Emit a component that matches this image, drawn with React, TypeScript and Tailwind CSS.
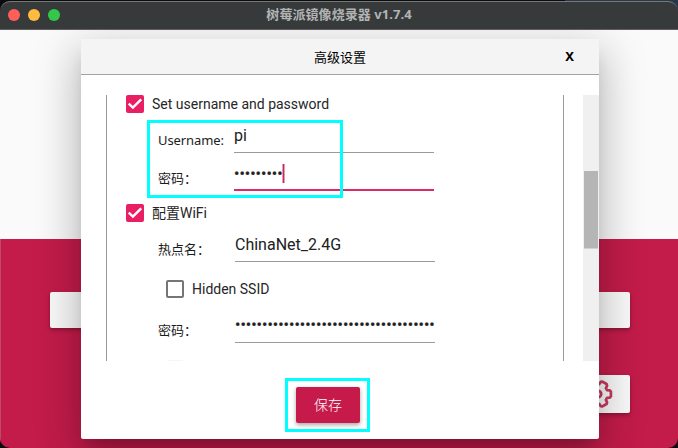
import type { ReactNode } from 'react';

const cjk = "font-['Noto_Sans','Noto_Sans_CJK_SC',sans-serif]";
const roboto = "font-['Roboto','Noto_Sans_CJK_SC',sans-serif]";

function Checkbox({ checked, label, className = '' }: { checked: boolean; label: string; className?: string }) {
  return (
    <div className={`flex h-[18px] items-center gap-2 ${className}`}>
      {checked ? (
        <span className="flex size-[18px] shrink-0 items-center justify-center rounded-[2px] bg-[#e91e63]">
          <svg width="18" height="18" viewBox="0 0 18 18" fill="none" stroke="#fff" strokeWidth="2.4">
            <path d="M2.7 8.6l4.2 4L15.2 4.4" />
          </svg>
        </span>
      ) : (
        <span className="size-[18px] shrink-0 rounded-[2px] border-2 border-[#767676]" />
      )}
      <span className={`whitespace-nowrap text-[14px] leading-[18px] text-[#262626] ${roboto}`}>{label}</span>
    </div>
  );
}

function Field({ label, className, labelClass = '', inputClass, children }: {
  label: string;
  className: string;
  labelClass?: string;
  inputClass: string;
  children: ReactNode;
}) {
  return (
    <div className={`flex pl-[51px] ${className}`}>
      <span className={`w-[76px] shrink-0 whitespace-nowrap text-[13px] leading-[18px] text-[#1c1c1c] ${cjk} ${labelClass}`}>{label}</span>
      <div className={`flex w-[200px] shrink-0 whitespace-nowrap text-[16px] leading-5 text-[#212121] ${roboto} ${inputClass}`}>
        {children}
      </div>
    </div>
  );
}

function Gear() {
  const angles = [0, 60, 120, 180, 240, 300];
  const tooth = [[9, -3.9], [11.8, -3.7], [12.9, -2.4], [12.9, 2.4], [11.8, 3.7], [9, 3.9]];
  const points = angles
    .flatMap((a) => {
      const r = (a * Math.PI) / 180;
      return tooth.map(([x, y]) => `${(x * Math.cos(r) - y * Math.sin(r)).toFixed(2)},${(x * Math.sin(r) + y * Math.cos(r)).toFixed(2)}`);
    })
    .join(' ');
  return (
    <svg width="30" height="30" viewBox="-15 -15 30 30" fill="none" stroke="#c83a5e" strokeWidth="2.7" strokeLinejoin="round">
      <polygon points={points} />
      <circle r="3.2" />
    </svg>
  );
}

export default function App() {
  return (
    <div className="relative h-[448px] w-[678px] overflow-hidden bg-[#0c0c0f] pt-px">
      <div className="absolute top-0 right-0 h-4 w-[113px] bg-[#28374b]" />
      <header className="relative z-10 flex h-[29px] items-center justify-center rounded-t-[10px] border-t border-b border-t-[#777979] border-b-[#625c5f] bg-[#373a3b] pb-1">
        <div className="absolute top-[7px] left-2 flex gap-2">
          <span className="size-3 rounded-full bg-[#ff5f59]" />
          <span className="size-3 rounded-full bg-[#ffbb40]" />
          <span className="size-3 rounded-full bg-[#34c84a]" />
        </div>
        <h1 className={`text-[13px] leading-[18px] font-bold tracking-[0.06px] text-[#b2b4b4] ${cjk}`}>树莓派镜像烧录器 v1.7.4</h1>
      </header>
      <div className="flex h-[418px] flex-col overflow-hidden rounded-b-[10px] bg-[#c31c4a]">
        <div className="h-[209px] shrink-0 bg-[#fafafa]" />
        <div className="flex flex-1 flex-col border-l border-[#bd4a6b] pt-[53px] pr-12 pl-[49px]">
          <div className="flex justify-between">
            <div className="h-9 w-[170px] rounded-[2px] bg-[#fafafa] shadow-[0_2px_4px_rgba(0,0,0,0.3)]" />
            <div className="h-9 w-[170px] rounded-[2px] bg-[#fafafa] shadow-[0_2px_4px_rgba(0,0,0,0.3)]" />
          </div>
          <div className="mt-[47px] flex h-[38px] w-16 items-center justify-center self-end rounded-[2px] bg-[#fafafa] shadow-[0_2px_4px_rgba(0,0,0,0.3)]">
            <Gear />
          </div>
        </div>
      </div>

      <section className="absolute top-[39px] left-[81px] flex h-[400px] w-[518px] flex-col rounded-b-[2px] bg-white shadow-[0_11px_15px_-7px_rgba(0,0,0,0.2),0_24px_38px_3px_rgba(0,0,0,0.14),0_9px_46px_8px_rgba(0,0,0,0.12)]">
        <div className="relative flex h-9 shrink-0 items-center justify-center border-b border-[#a3a3a3] bg-[#f4f4f4]">
          <h2 className={`text-[13px] leading-[18px] text-black ${cjk}`}>高级设置</h2>
          <button className={`absolute top-2 right-[25px] text-[13px] leading-[18px] font-bold text-black ${cjk}`}>X</button>
        </div>

        <div className="mt-5 flex h-[266px] shrink-0 justify-between overflow-hidden pl-[25px]">
          <div className="flex w-[458px] flex-col border-x border-[#9a9a9a]">
            <Checkbox checked label="Set username and password" className="ml-[19px] shrink-0" />
            <Field label="Username:" className="h-10 shrink-0" labelClass="pt-[18px] tracking-[-0.1px]" inputClass="border-b border-[#9b9b9b] pt-[13px]">pi</Field>
            <Field label="密码：" className="h-[38px] shrink-0" labelClass="pt-4" inputClass="border-b-2 border-[#d92b64] pt-[11px]">
              <span className="[-webkit-text-stroke:0.2px]">•••••••••</span>
              <span className="-ml-px h-[19px] w-[3px] border-x border-[#e79ab3] bg-[#c92a5c]" />
            </Field>
            <Checkbox checked label="配置WiFi" className="mt-[13px] ml-[19px] shrink-0" />
            <Field label="热点名：" className="h-10 shrink-0" labelClass="pt-[18px]" inputClass="ml-px border-b border-[#9b9b9b] pt-[13px]">ChinaNet_2.4G</Field>
            <Checkbox checked={false} label="Hidden SSID" className="mt-[18px] ml-[59px] shrink-0" />
            <Field label="密码：" className="h-[45px] shrink-0" labelClass="pt-[23px]" inputClass="ml-px border-b border-[#9b9b9b] pt-[17px]">
              <span className="[-webkit-text-stroke:0.2px]">•••••••••••••••••••••••••••••••••••••</span>
            </Field>
            <div className="mt-[17px] ml-[61px] h-px w-[15px] shrink-0 bg-[#f6f6f6]" />
          </div>
          <div className="w-4 bg-[#f0f0f0] pt-[76px]">
            <div className="mx-auto h-[77px] w-3.5 bg-[#b5b5b5] shadow-[0_1px_0_#d2d2d2]" />
          </div>
        </div>

        <div className="flex justify-center pt-[26px] pr-6">
          <button className={`h-9 w-16 rounded-[2px] bg-[#c51a4a] text-[14px] leading-9 font-light text-white shadow-[0_2px_4px_rgba(0,0,0,0.35)] ${cjk}`}>保存</button>
        </div>
      </section>

      <div className="absolute top-[120px] left-[147px] h-[78px] w-[196px] border-[3px] border-[#00ffff]" />
      <div className="absolute top-[378px] left-[285px] h-[54px] w-[85px] border-[3px] border-[#00ffff]" />
    </div>
  );
}
